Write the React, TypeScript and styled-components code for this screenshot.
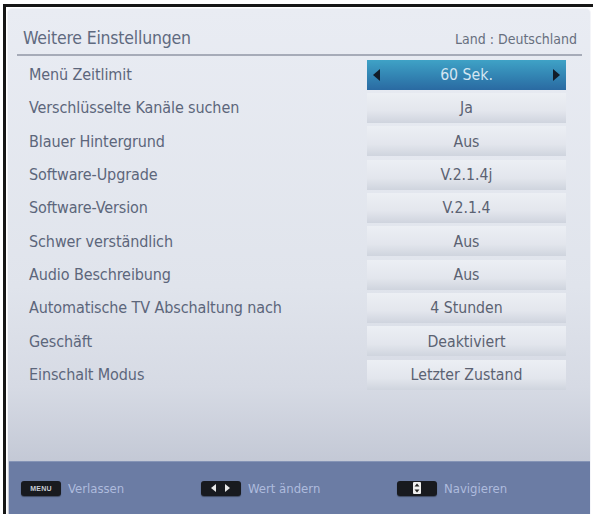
import React from 'react';
import styled, { createGlobalStyle } from 'styled-components';

type Setting = { label: string; value: string };

const settings: Setting[] = [
  { label: 'Menü Zeitlimit', value: '60 Sek.' },
  { label: 'Verschlüsselte Kanäle suchen', value: 'Ja' },
  { label: 'Blauer Hintergrund', value: 'Aus' },
  { label: 'Software-Upgrade', value: 'V.2.1.4j' },
  { label: 'Software-Version', value: 'V.2.1.4' },
  { label: 'Schwer verständlich', value: 'Aus' },
  { label: 'Audio Beschreibung', value: 'Aus' },
  { label: 'Automatische TV Abschaltung nach', value: '4 Stunden' },
  { label: 'Geschäft', value: 'Deaktiviert' },
  { label: 'Einschalt Modus', value: 'Letzter Zustand' },
];

const GlobalStyle = createGlobalStyle`
  body {
    margin: 0;
    background: #ffffff;
    font-family: 'DejaVu Sans Condensed', 'DejaVu Sans', sans-serif;
  }
`;

const ArrowLeft = ({ color }: { color: string }) => (
  <svg width="7" height="12" viewBox="0 0 7 12">
    <polygon points="7,0 0,6 7,12" fill={color} />
  </svg>
);

const ArrowRight = ({ color }: { color: string }) => (
  <svg width="7" height="12" viewBox="0 0 7 12">
    <polygon points="0,0 7,6 0,12" fill={color} />
  </svg>
);

const App = () => {
  return (
    <>
      <GlobalStyle />
      <Frame>
        <Panel>
          <Header>
            <Title>Weitere Einstellungen</Title>
            <Country>Land : Deutschland</Country>
          </Header>
          <List>
            {settings.map((s, i) => (
              <Row key={s.label}>
                <Label>{s.label}</Label>
                <ValueBox $selected={i === 0}>
                  {i === 0 && <ArrowLeft color="#121c28" />}
                  <ValueText>{s.value}</ValueText>
                  {i === 0 && <ArrowRight color="#121c28" />}
                </ValueBox>
              </Row>
            ))}
          </List>
          <Footer>
            <Hint>
              <Key>
                <KeyText>MENU</KeyText>
              </Key>
              <HintText>Verlassen</HintText>
            </Hint>
            <Hint>
              <Key>
                <svg width="22" height="8" viewBox="0 0 22 8">
                  <polygon points="6,0 1,4 6,8" fill="#e8e8e8" />
                  <polygon points="15,0 20,4 15,8" fill="#e8e8e8" />
                </svg>
              </Key>
              <HintText>Wert ändern</HintText>
            </Hint>
            <Hint>
              <Key>
                <svg width="14" height="12" viewBox="0 0 14 12">
                  <rect x="3" y="0" width="8" height="12" rx="1" fill="#f0f0f0" />
                  <polygon points="7,1.5 4.5,4.5 9.5,4.5" fill="#222" />
                  <polygon points="7,10.5 4.5,7.5 9.5,7.5" fill="#222" />
                </svg>
              </Key>
              <HintText>Navigieren</HintText>
            </Hint>
          </Footer>
        </Panel>
      </Frame>
    </>
  );
};

export default App;

const Frame = styled.div`
  box-sizing: border-box;
  margin: 4px 0 0 3px;
  width: 590px;
  height: 510px;
  border-top: 3px solid #161616;
  border-left: 3px solid #161616;
  padding: 1px 2px 0 1px;
`;

const Panel = styled.div`
  display: flex;
  flex-direction: column;
  height: 100%;
  border-radius: 5px 5px 0 0;
  border: 1px solid #f4f5f9;
  border-bottom: none;
  box-sizing: border-box;
  background: linear-gradient(
    180deg,
    #e9ecf3 0%,
    #e0e4ec 55%,
    #d6dae4 75%,
    #c3c8d5 90%
  );
  overflow: hidden;
`;

const Header = styled.div`
  display: flex;
  align-items: flex-end;
  justify-content: space-between;
  height: 47px;
  margin: 0 8px 0 9px;
  padding: 0 5px 6px 6px;
  border-bottom: 2px solid #a6abb8;
  box-sizing: border-box;
`;

const Title = styled.div`
  font-size: 17.5px;
  color: #5f6a80;
  letter-spacing: -0.2px;
`;

const Country = styled.div`
  font-size: 14px;
  color: #676f7e;
  padding-bottom: 1px;
`;

const List = styled.div`
  display: grid;
  grid-auto-rows: 33.33px;
  padding: 2px 24px 0 21px;
`;

const Row = styled.div`
  display: grid;
  grid-template-columns: 1fr 199px;
  align-items: center;
`;

const Label = styled.div`
  font-size: 16px;
  color: #5c667b;
  letter-spacing: -0.1px;
`;

const ValueBox = styled.div<{ $selected: boolean }>`
  display: flex;
  align-items: center;
  justify-content: space-between;
  height: 30px;
  padding: 0 6px;
  box-sizing: border-box;
  color: ${p => (p.$selected ? '#d4e6f2' : '#5b6272')};
  background: ${p =>
    p.$selected
      ? 'linear-gradient(180deg, #3fa2c6 0%, #3386b4 50%, #2a6aa2 100%)'
      : 'linear-gradient(180deg, #eceff4 0%, #e3e6ed 60%, #cfd4de 100%)'};
`;

const ValueText = styled.span`
  flex: 1;
  text-align: center;
  font-size: 15.7px;
`;

const Footer = styled.div`
  margin-top: auto;
  height: 52px;
  display: grid;
  grid-template-columns: 180px 196px 1fr;
  align-items: center;
  padding: 0 0 0 12px;
  margin-left: 1px;
  background: #6b7ca4;
  border-top: 1px solid #8594b6;
`;

const Hint = styled.div`
  display: flex;
  align-items: center;
  gap: 7px;
`;

const Key = styled.div`
  width: 40px;
  height: 15px;
  border-radius: 3px;
  background: #181a1f;
  box-shadow: 0 1px 1px rgba(0, 0, 0, 0.4);
  display: flex;
  align-items: center;
  justify-content: center;
`;

const KeyText = styled.span`
  font-family: 'Liberation Sans', sans-serif;
  font-size: 7px;
  font-weight: 700;
  color: #c8ccd4;
  letter-spacing: 0.2px;
`;

const HintText = styled.span`
  font-size: 13px;
  color: #aebbdd;
`;
